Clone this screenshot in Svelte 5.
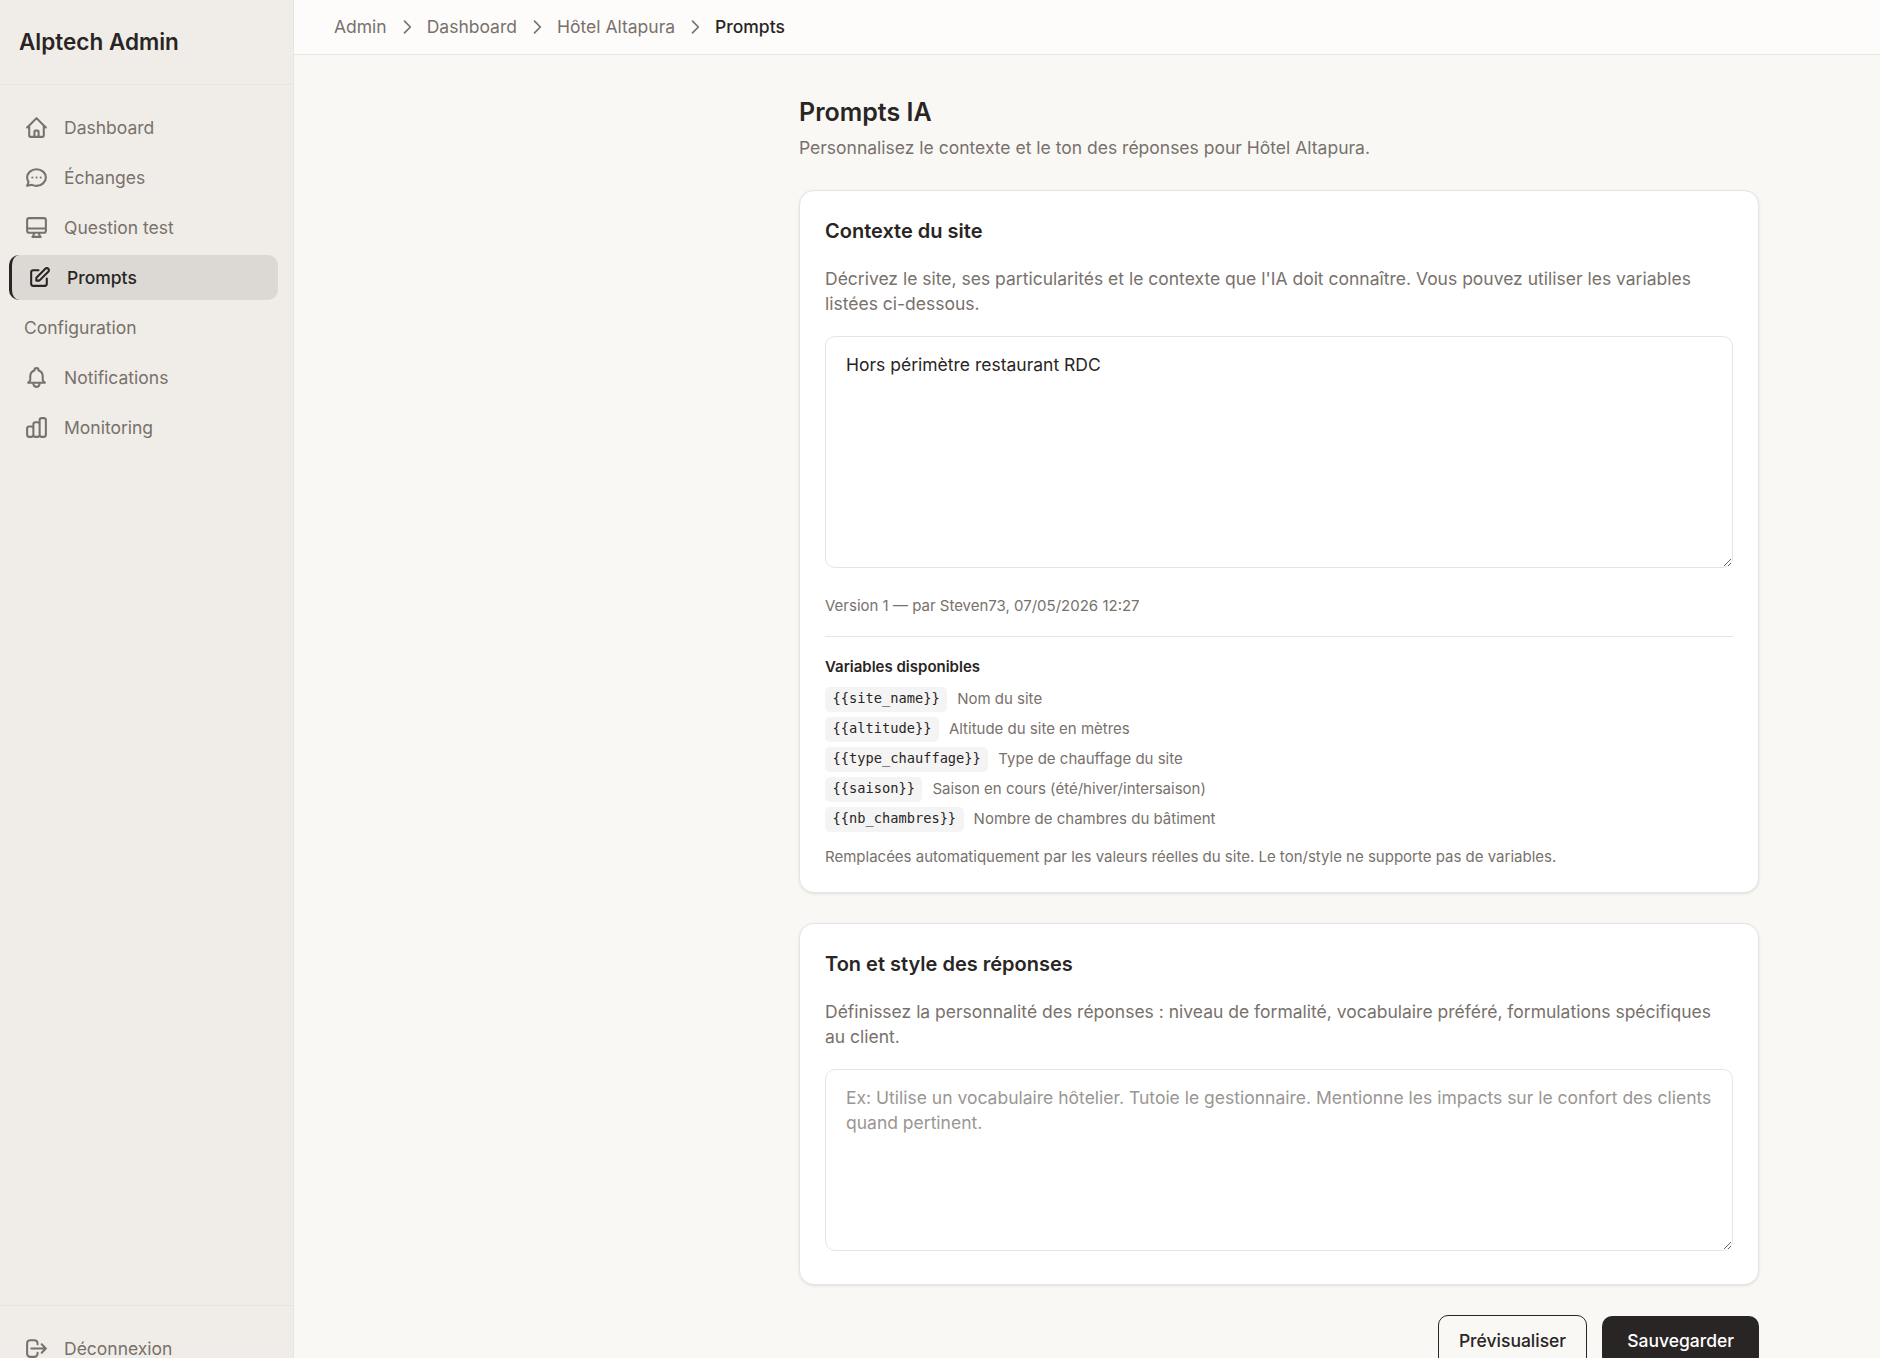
<script lang="ts">
  const icons: Record<string, string> = {
    home: 'M3 12l2-2m0 0l7-7 7 7M5 10v10a1 1 0 001 1h3m10-11l2 2m-2-2v10a1 1 0 01-1 1h-3m-6 0a1 1 0 001-1v-4a1 1 0 011-1h2a1 1 0 011 1v4a1 1 0 001 1m-6 0h6',
    chat: 'M8 12h.01M12 12h.01M16 12h.01M21 12c0 4.418-4.03 8-9 8a9.863 9.863 0 01-4.255-.949L3 20l1.395-3.72C3.512 15.042 3 13.574 3 12c0-4.418 4.03-8 9-8s9 3.582 9 8z',
    desktop: 'M9.75 17L9 20l-1 1h8l-1-1-.75-3M3 13h18M5 17h14a2 2 0 002-2V5a2 2 0 00-2-2H5a2 2 0 00-2 2v10a2 2 0 002 2z',
    pencil: 'M11 5H6a2 2 0 00-2 2v11a2 2 0 002 2h11a2 2 0 002-2v-5m-1.414-9.414a2 2 0 112.828 2.828L11.828 15H9v-2.828l8.586-8.586z',
    bell: 'M15 17h5l-1.405-1.405A2.032 2.032 0 0118 14.158V11a6.002 6.002 0 00-4-5.659V5a2 2 0 10-4 0v.341C7.67 6.165 6 8.388 6 11v3.159c0 .538-.214 1.055-.595 1.436L4 17h5m6 0v1a3 3 0 11-6 0v-1m6 0H9',
    chart: 'M9 19v-6a2 2 0 00-2-2H5a2 2 0 00-2 2v6a2 2 0 002 2h2a2 2 0 002-2zm0 0V9a2 2 0 012-2h2a2 2 0 012 2v10m-6 0a2 2 0 002 2h2a2 2 0 002-2m0 0V5a2 2 0 012-2h2a2 2 0 012 2v14a2 2 0 01-2 2h-2a2 2 0 01-2-2z',
    logout: 'M17 16l4-4m0 0l-4-4m4 4H7m6 4v1a3 3 0 01-3 3H6a3 3 0 01-3-3V7a3 3 0 013-3h4a3 3 0 013 3v1',
    chevron: 'M9 5l7 7-7 7',
  };

  const nav = [
    { label: 'Dashboard', icon: 'home' },
    { label: 'Échanges', icon: 'chat' },
    { label: 'Question test', icon: 'desktop' },
    { label: 'Prompts', icon: 'pencil', active: true },
    { label: 'Configuration' },
    { label: 'Notifications', icon: 'bell' },
    { label: 'Monitoring', icon: 'chart' },
  ];

  const crumbs = ['Admin', 'Dashboard', 'Hôtel Altapura'];

  const variables = [
    { name: 'site_name', description: 'Nom du site' },
    { name: 'altitude', description: 'Altitude du site en mètres' },
    { name: 'type_chauffage', description: 'Type de chauffage du site' },
    { name: 'saison', description: 'Saison en cours (été/hiver/intersaison)' },
    { name: 'nb_chambres', description: 'Nombre de chambres du bâtiment' },
  ];

  let context = $state('Hors périmètre restaurant RDC');
  let tone = $state('');
</script>

{#snippet icon(name: string)}
  <svg class="icon" viewBox="0 0 24 24" aria-hidden="true"><path d={icons[name]} /></svg>
{/snippet}

<div class="layout">
  <aside class="sidebar">
    <div class="brand">Alptech Admin</div>
    <nav class="nav">
      {#each nav as item}
        <a href="#top" class="nav-item" class:active={item.active}>
          {#if item.icon}{@render icon(item.icon)}{/if}
          <span>{item.label}</span>
        </a>
      {/each}
    </nav>
    <div class="sidebar-footer">
      <a href="#top" class="nav-item">
        {@render icon('logout')}
        <span>Déconnexion</span>
      </a>
    </div>
  </aside>

  <div class="main">
    <header class="topbar">
      {#each crumbs as crumb}
        <a href="#top">{crumb}</a>
        {@render icon('chevron')}
      {/each}
      <span class="current">Prompts</span>
    </header>

    <main class="content">
      <h1>Prompts IA</h1>
      <p class="subtitle">Personnalisez le contexte et le ton des réponses pour Hôtel Altapura.</p>

      <section class="card">
        <h2>Contexte du site</h2>
        <p class="description">
          Décrivez le site, ses particularités et le contexte que l'IA doit connaître. Vous pouvez utiliser les variables listées ci-dessous.
        </p>
        <textarea rows="8" bind:value={context} spellcheck="false"></textarea>
        <p class="version">Version 1 — par Steven73, 07/05/2026 12:27</p>
        <div class="variables">
          <h3>Variables disponibles</h3>
          <ul>
            {#each variables as variable}
              <li>
                <code>{'{{' + variable.name + '}}'}</code>
                <span>{variable.description}</span>
              </li>
            {/each}
          </ul>
          <p>Remplacées automatiquement par les valeurs réelles du site. Le ton/style ne supporte pas de variables.</p>
        </div>
      </section>

      <section class="card">
        <h2>Ton et style des réponses</h2>
        <p class="description">
          Définissez la personnalité des réponses : niveau de formalité, vocabulaire préféré, formulations spécifiques au client.
        </p>
        <textarea
          rows="6"
          bind:value={tone}
          placeholder="Ex: Utilise un vocabulaire hôtelier. Tutoie le gestionnaire. Mentionne les impacts sur le confort des clients quand pertinent."
        ></textarea>
      </section>

      <div class="actions">
        <button class="btn outline">Prévisualiser</button>
        <button class="btn primary">Sauvegarder</button>
      </div>
    </main>
  </div>
</div>

<style>
  :global(body) {
    margin: 0;
    overflow: hidden;
  }

  .layout {
    --color-text: #292524;
    --color-muted: #78716c;
    --color-border: #e5e5e5;
    display: flex;
    height: 100vh;
    overflow: hidden;
    background: #f9f8f5;
    color: var(--color-text);
    font-family: Inter, sans-serif;
    font-size: 17.5px;
    line-height: 25px;
  }

  .layout :is(h1, h2, h3, p, ul) {
    margin: 0;
    padding: 0;
  }

  a {
    color: inherit;
    text-decoration: none;
  }

  .icon {
    width: 25px;
    height: 25px;
    flex-shrink: 0;
    fill: none;
    stroke: currentColor;
    stroke-width: 2;
    stroke-linecap: round;
    stroke-linejoin: round;
  }

  .sidebar {
    display: flex;
    flex-direction: column;
    flex-shrink: 0;
    box-sizing: border-box;
    width: 294px;
    height: 1391px;
    background: #f0ede8;
    border-right: 1px solid var(--color-border);
    color: var(--color-muted);
  }

  .brand {
    box-sizing: border-box;
    height: 85px;
    padding: 24px 19px 25px;
    border-bottom: 1px solid var(--color-border);
    color: var(--color-text);
    font-size: 22.5px;
    font-weight: 600;
    line-height: 35px;
  }

  .nav {
    display: flex;
    flex: 1;
    flex-direction: column;
    gap: 5px;
    padding: 20px 15px 20px 9px;
  }

  .nav-item {
    display: flex;
    align-items: center;
    gap: 15px;
    box-sizing: border-box;
    height: 45px;
    padding: 0 15px;
    border-radius: 10px;
  }

  .nav-item.active {
    border-left: 3px solid var(--color-text);
    background: #dcd9d4;
    color: var(--color-text);
    font-weight: 500;
  }

  .sidebar-footer {
    padding: 20px 15px 20px 9px;
    border-top: 1px solid var(--color-border);
  }

  .main {
    flex: 1;
    min-width: 0;
  }

  .topbar {
    display: flex;
    align-items: center;
    gap: 10px;
    box-sizing: border-box;
    height: 55px;
    padding: 0 40px;
    background: #fdfcfa;
    border-bottom: 1px solid var(--color-border);
    color: var(--color-muted);
  }

  .topbar a,
  .topbar .current {
    padding-bottom: 1px;
  }

  .topbar :global(.icon) {
    width: 20px;
    height: 20px;
  }

  .topbar .current {
    color: var(--color-text);
    font-weight: 500;
  }

  .content {
    width: 960px;
    margin-left: 505px;
    padding-top: 40px;
  }

  h1 {
    font-size: 25px;
    font-weight: 600;
    line-height: 35px;
  }

  .content .subtitle {
    margin-top: 5px;
    color: var(--color-muted);
  }

  .card {
    margin-top: 30px;
    padding: 25px;
    background: #fff;
    border: 1px solid var(--color-border);
    border-radius: 15px;
    box-shadow: 0 1px 3px rgba(0, 0, 0, 0.1);
  }

  h2 {
    font-size: 20px;
    font-weight: 600;
    line-height: 30px;
  }

  .card .description {
    margin: 20px 0;
    color: var(--color-muted);
  }

  textarea {
    display: block;
    box-sizing: border-box;
    width: 100%;
    margin: 0 0 8px;
    padding: 15px 20px;
    border: 1px solid var(--color-border);
    border-radius: 10px;
    background: #fff;
    color: var(--color-text);
    font: inherit;
    resize: vertical;
  }

  textarea::placeholder {
    color: #9a9693;
  }

  .version,
  .variables {
    font-size: 15px;
    line-height: 20px;
    color: var(--color-muted);
  }

  .card .version {
    margin: 28px 0 20px;
  }

  .variables {
    padding-top: 20px;
    border-top: 1px solid var(--color-border);
  }

  h3 {
    color: var(--color-text);
    font-size: 15px;
    font-weight: 600;
  }

  .variables ul {
    display: flex;
    flex-direction: column;
    gap: 5px;
    margin: 10px 0 15px;
    list-style: none;
  }

  li {
    display: flex;
    align-items: center;
    gap: 10px;
    height: 25px;
  }

  li span {
    padding-bottom: 1px;
  }

  code {
    padding: 0 7.5px 2px;
    border-radius: 5px;
    background: #f4f4f4;
    color: var(--color-text);
    font-family: Consolas, 'DejaVu Sans Mono', monospace;
    font-size: 13.7px;
    line-height: 23px;
  }

  .actions {
    display: flex;
    align-items: center;
    justify-content: flex-end;
    gap: 15px;
    margin-top: 30px;
  }

  .btn {
    padding: 12px 20px 13px;
    border: none;
    border-radius: 10px;
    font: inherit;
    font-weight: 500;
  }

  .btn.outline {
    border: 1px solid var(--color-text);
    background: transparent;
    color: var(--color-text);
  }

  .btn.primary {
    padding: 12px 25px 13px;
    background: var(--color-text);
    color: #fff;
  }
</style>
